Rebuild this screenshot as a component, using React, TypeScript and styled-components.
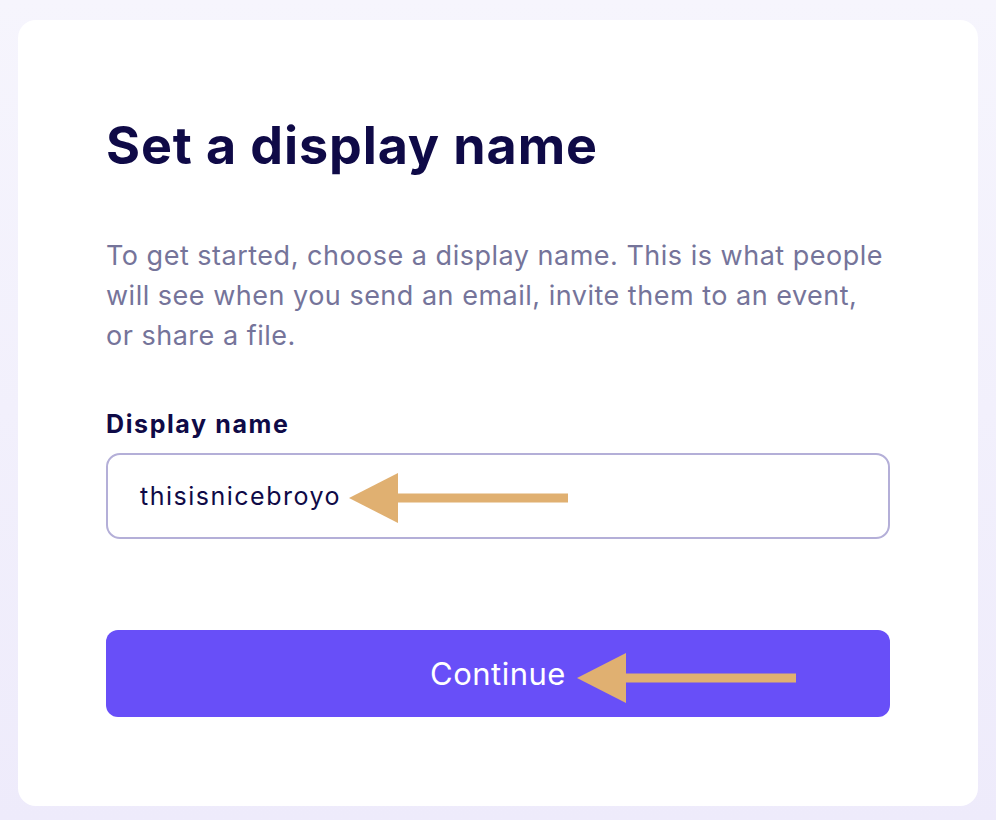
import React from "react";
import styled, { createGlobalStyle } from "styled-components";

const GlobalStyle = createGlobalStyle`
  html, body {
    margin: 0;
    padding: 0;
  }
  body {
    width: 996px;
    height: 820px;
    background: linear-gradient(180deg, #f6f5fd 0%, #eeebfb 100%);
    font-family: Inter, "Noto Sans", sans-serif;
    -webkit-font-smoothing: antialiased;
  }
`;

const Page = styled.main`
  padding: 20px 18px 14px 18px;
  box-sizing: border-box;
  height: 820px;
`;

const Card = styled.section`
  background: #ffffff;
  border-radius: 18px;
  height: 786px;
  box-sizing: border-box;
  padding: 96px 88px 0 88px;
  display: flex;
  flex-direction: column;
`;

const Title = styled.h1`
  margin: 0;
  font-size: 52px;
  line-height: 60px;
  font-weight: 700;
  letter-spacing: 0.9px;
  color: #0f0a47;
`;

const Intro = styled.p`
  margin: 60px 0 0 0;
  font-size: 27px;
  line-height: 40px;
  letter-spacing: 0.5px;
  color: #75749a;
  max-width: 784px;
`;

const Label = styled.label`
  display: block;
  margin-top: 52px;
  font-size: 25px;
  line-height: 32px;
  font-weight: 700;
  letter-spacing: 1.6px;
  color: #0f0a47;
`;

const Field = styled.div`
  position: relative;
  margin-top: 13px;
  height: 86px;
  box-sizing: border-box;
  border: 2px solid #b4afd8;
  border-radius: 14px;
  display: flex;
  align-items: center;
  padding: 0 32px;
  font-size: 25px;
  letter-spacing: 1.5px;
  color: #0f0a47;
`;

const Button = styled.button`
  position: relative;
  margin-top: 91px;
  height: 87px;
  border: none;
  border-radius: 12px;
  background: #684ff8;
  color: #ffffff;
  font-family: Inter, "Noto Sans", sans-serif;
  font-size: 31px;
  letter-spacing: 0.5px;
  cursor: pointer;
`;

const Pointer = styled.svg<{ $left: number; $top: number }>`
  position: absolute;
  left: ${(p) => p.$left}px;
  top: ${(p) => p.$top}px;
`;

function Arrow({ left, top }: { left: number; top: number }) {
  return (
    <Pointer $left={left} $top={top} width="222" height="52" viewBox="0 0 222 52">
      <polygon points="0,26 49,1 49,51" fill="#e0b071" />
      <rect x="48" y="21.5" width="171" height="9" fill="#e0b071" />
    </Pointer>
  );
}

export default function App() {
  return (
    <>
      <GlobalStyle />
      <Page>
        <Card>
          <Title>Set a display name</Title>
          <Intro>
            To get started, choose a display name. This is what people will see
            when you send an email, invite them to an event, or share a file.
          </Intro>
          <Label>Display name</Label>
          <Field>
            thisisnicebroyo
            <Arrow left={241} top={17} />
          </Field>
          <Button>
            Continue
            <Arrow left={471} top={22} />
          </Button>
        </Card>
      </Page>
    </>
  );
}
